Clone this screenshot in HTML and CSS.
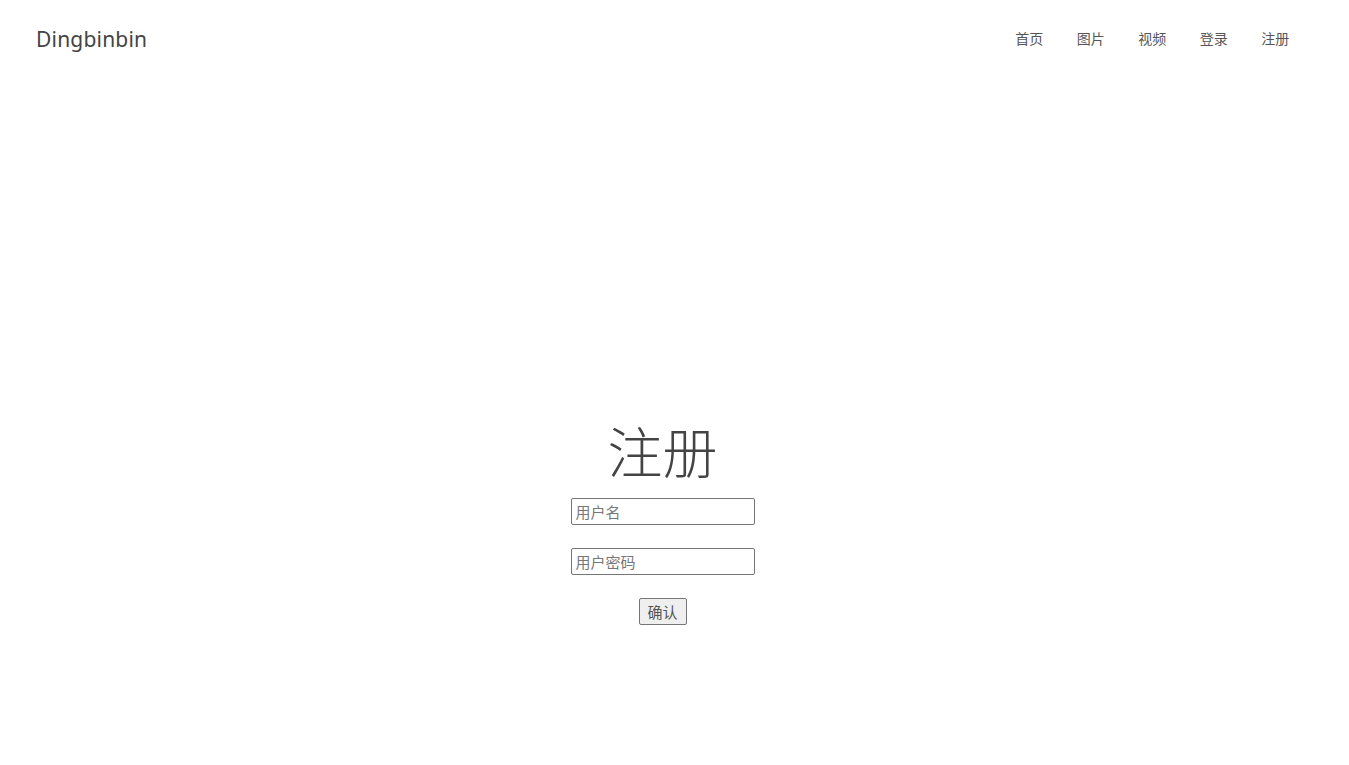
FILE: index.html
```html
<!DOCTYPE html>
<html lang="zh">
<head>
<meta charset="utf-8">
<title>注册</title>
<link rel="stylesheet" href="styles.css">
</head>
<body>
<header class="header">
  <div class="logo">Dingbinbin</div>
  <nav class="nav">
    <a class="nav-item" href="#">首页</a>
    <a class="nav-item" href="#">图片</a>
    <a class="nav-item" href="#">视频</a>
    <a class="nav-item" href="#">登录</a>
    <a class="nav-item" href="#">注册</a>
  </nav>
</header>
<main class="main">
  <h1 class="title">注册</h1>
  <form class="form">
    <input class="field" type="text" placeholder="用户名">
    <input class="field" type="password" placeholder="用户密码">
    <button class="btn" type="button">确认</button>
  </form>
</main>
</body>
</html>
```
FILE: styles.css
```css
* { box-sizing: border-box; }
html, body { margin: 0; padding: 0; }
body {
  font-family: "Noto Sans", "Noto Sans CJK SC", sans-serif;
  color: #444;
  background: #fff;
}
.header {
  display: flex;
  justify-content: space-between;
  align-items: center;
  height: 78px;
  padding: 0 43px 0 36px;
}
.logo {
  font-size: 21px;
  color: #444;
  letter-spacing: 0.2px;
}
.nav {
  display: flex;
}
.nav-item {
  font-size: 14px;
  color: #555;
  text-decoration: none;
  padding: 0 16.75px;
  line-height: 20px;
}
.main {
  display: flex;
  flex-direction: column;
  align-items: center;
  padding-top: 334px;
  padding-right: 24px;
}
.title {
  margin: 0;
  font-size: 55px;
  font-weight: 300;
  line-height: 80px;
  color: #444;
}
.form {
  display: flex;
  flex-direction: column;
  align-items: center;
  gap: 23px;
  margin-top: 6px;
}
.field {
  width: 184px;
  height: 27px;
  border: 1px solid #767676;
  border-radius: 2px;
  padding: 0 4px;
  font-family: "Noto Sans CJK SC", sans-serif;
  font-size: 15px;
  color: #333;
}
.field::placeholder { color: #777; }
.btn {
  width: 48px;
  height: 27px;
  border: 1px solid #767676;
  border-radius: 2px;
  background: #efefef;
  font-family: "Noto Sans CJK SC", sans-serif;
  font-size: 15px;
  color: #555;
  padding: 0;
}
```
